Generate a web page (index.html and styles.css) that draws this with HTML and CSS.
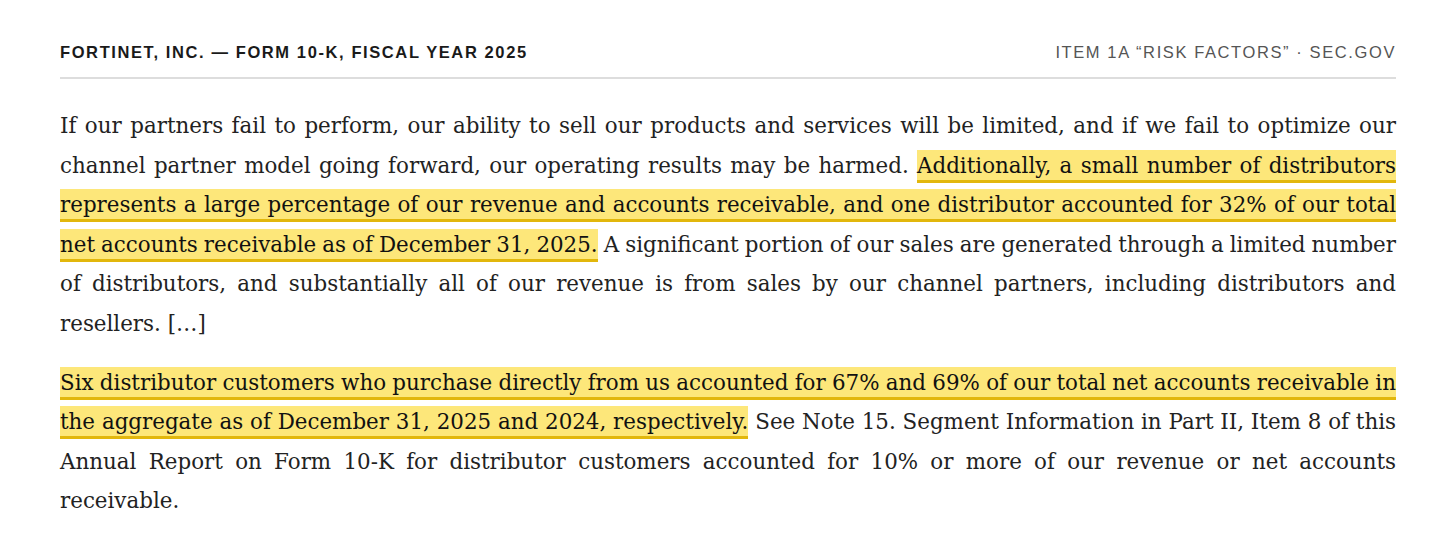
FILE: index.html
```html
<!DOCTYPE html>
<html lang="en">
<head>
<meta charset="utf-8">
<title>Fortinet 10-K excerpt</title>
<link rel="stylesheet" href="styles.css">
</head>
<body>
<main class="page">
  <header class="masthead">
    <div class="masthead-title">FORTINET, INC. — FORM 10-K, FISCAL YEAR 2025</div>
    <div class="masthead-source">ITEM 1A “RISK FACTORS” · SEC.GOV</div>
  </header>
  <article class="excerpt">
    <p>If our partners fail to perform, our ability to sell our products and services will be limited, and if we fail to optimize our channel partner model going forward, our operating results may be harmed. <mark class="hl">Additionally, a small number of distributors represents a large percentage of our revenue and accounts receivable, and one distributor accounted for 32% of our total <span class="snug-lg">net accounts receivable as of December 31, 2025.</span></mark><span class="snug-lg"> A significant portion of our sales are generated through a limited number</span> of distributors, and substantially all of our revenue is from sales by our channel partners, including distributors and resellers. […]</p>
    <p><mark class="hl"><span class="snug">Six distributor customers who purchase directly from us accounted for 67% and 69% of our total net accounts receivable in</span> <span class="snug">the aggregate as of December 31, 2025 and 2024, respectively.</span></mark><span class="snug"> See Note 15. Segment Information in Part II, Item 8 of this</span> Annual Report on Form 10-K for distributor customers accounted for 10% or more of our revenue or net accounts receivable.</p>
  </article>
</main>
</body>
</html>
```
FILE: styles.css
```css
html, body {
  margin: 0;
  padding: 0;
  background: #ffffff;
}

.page {
  padding: 42px 60px 0 60px;
}

.masthead {
  display: flex;
  justify-content: space-between;
  align-items: baseline;
  padding-bottom: 15px;
  border-bottom: 2px solid #dddddd;
  font-family: "Liberation Sans", Arial, sans-serif;
  font-size: 16.5px;
  line-height: 20px;
  letter-spacing: 1.6px;
}

.masthead-title {
  font-weight: 700;
  color: #1a1a1a;
}

.masthead-source {
  color: #555555;
}

.excerpt {
  padding-top: 27px;
  font-family: "DejaVu Serif", Georgia, serif;
  font-size: 21.4px;
  line-height: 39.6px;
  color: #222222;
  text-align: justify;
}

.excerpt p {
  margin: 0 0 19px 0;
}

/* justified lines: reduced natural word spacing only changes where lines break */
.snug {
  word-spacing: -2px;
}

.snug-lg {
  word-spacing: -1.7px;
}

.hl {
  background: #fde77a;
  color: #111111;
  padding: 3px 0 2px 0;
  border-bottom: 3px solid #e2b70c;
  -webkit-box-decoration-break: clone;
  box-decoration-break: clone;
}
```
